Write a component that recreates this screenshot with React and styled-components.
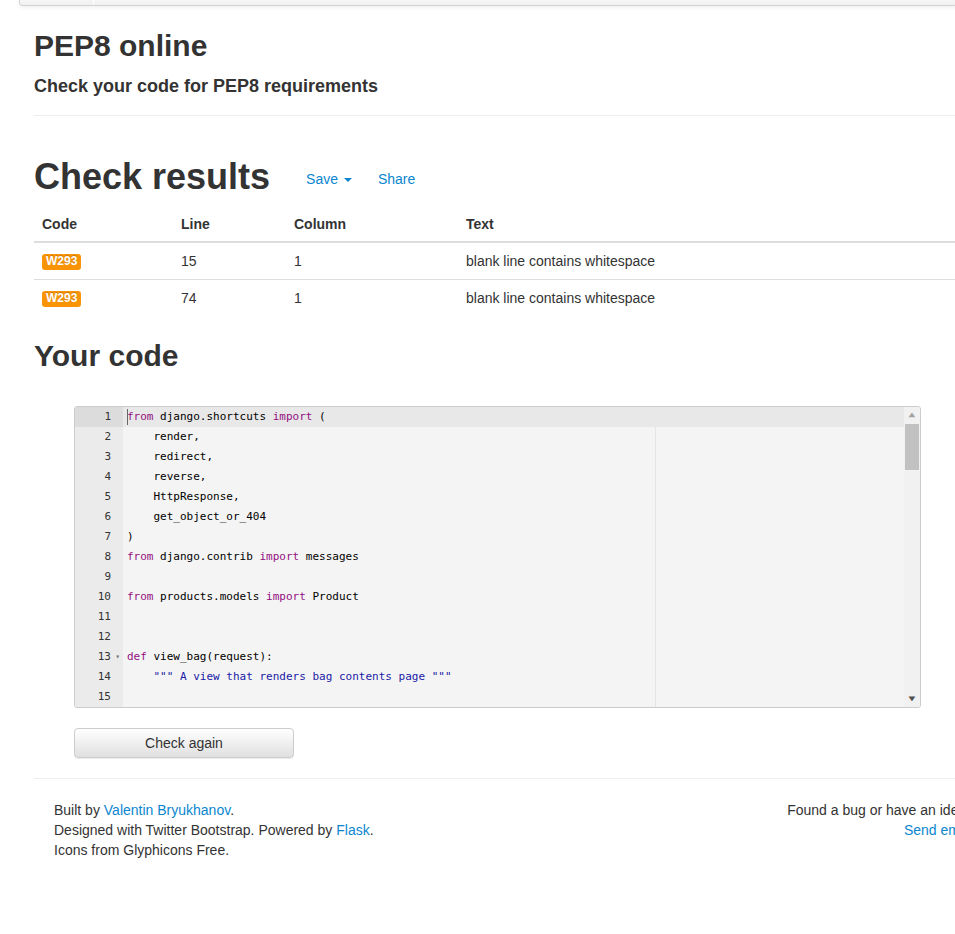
import React from 'react'
import styled, { createGlobalStyle } from 'styled-components'

const GlobalStyle = createGlobalStyle`
  html, body {
    margin: 0;
    padding: 0;
    background: #fff;
    overflow-x: hidden;
  }
  body {
    font-family: "Liberation Sans", Arial, sans-serif;
    font-size: 14px;
    line-height: 20px;
    color: #333;
  }
`

const codeLines = [
  [['k', 'from'], ['t', ' django.shortcuts '], ['k', 'import'], ['t', ' (']],
  [['t', '    render,']],
  [['t', '    redirect,']],
  [['t', '    reverse,']],
  [['t', '    HttpResponse,']],
  [['t', '    get_object_or_404']],
  [['t', ')']],
  [['k', 'from'], ['t', ' django.contrib '], ['k', 'import'], ['t', ' messages']],
  [],
  [['k', 'from'], ['t', ' products.models '], ['k', 'import'], ['t', ' Product']],
  [],
  [],
  [['k', 'def'], ['t', ' view_bag(request):']],
  [['t', '    '], ['s', '""" A view that renders bag contents page """']],
  [],
]

const results = [
  { code: 'W293', line: 15, column: 1, text: 'blank line contains whitespace' },
  { code: 'W293', line: 74, column: 1, text: 'blank line contains whitespace' },
]

function App() {
  return (
    <>
      <GlobalStyle />
      <Container>
        <Navbar>
          <Brand />
        </Navbar>
        <PageHeader>
          <Title>PEP8 online</Title>
          <Subtitle>Check your code for PEP8 requirements</Subtitle>
        </PageHeader>

        <ResultsHeader>
          <BigTitle>Check results</BigTitle>
          <HeaderLinks>
            <Link href="#">
              Save <Caret />
            </Link>
            <Link href="#">Share</Link>
          </HeaderLinks>
        </ResultsHeader>

        <Table>
          <thead>
            <tr>
              <Th $w={123}>Code</Th>
              <Th $w={97}>Line</Th>
              <Th $w={156}>Column</Th>
              <Th>Text</Th>
            </tr>
          </thead>
          <tbody>
            {results.map((r, i) => (
              <tr key={i}>
                <Td><Label>{r.code}</Label></Td>
                <Td>{r.line}</Td>
                <Td>{r.column}</Td>
                <Td>{r.text}</Td>
              </tr>
            ))}
          </tbody>
        </Table>

        <Title>Your code</Title>

        <CodeSection>
          <Editor>
            <Gutter>
              {codeLines.map((_, i) => (
                <GutterCell key={i} $active={i === 0}>
                  {i + 1}
                  {i === 12 && <Fold>▾</Fold>}
                </GutterCell>
              ))}
            </Gutter>
            <Content>
              <PrintMargin />
              {codeLines.map((tokens, i) => (
                <CodeLine key={i} $active={i === 0}>
                  {i === 0 && <Cursor />}
                  {tokens.map(([type, value], j) => (
                    <Token key={j} $type={type}>{value}</Token>
                  ))}
                </CodeLine>
              ))}
            </Content>
            <Scrollbar>
              <ScrollArrow>▲</ScrollArrow>
              <ScrollTrack>
                <Thumb />
              </ScrollTrack>
              <ScrollArrow>▼</ScrollArrow>
            </Scrollbar>
          </Editor>
          <Button>Check again</Button>
        </CodeSection>

        <Hr />

        <Footer>
          <FooterCol>
            <div>Built by <Link href="#">Valentin Bryukhanov</Link>.</div>
            <div>Designed with Twitter Bootstrap. Powered by <Link href="#">Flask</Link>.</div>
            <div>Icons from Glyphicons Free.</div>
          </FooterCol>
          <FooterCol $right>
            <div>Found a bug or have an idea?</div>
            <div><Link href="#">Send email</Link></div>
          </FooterCol>
        </Footer>
      </Container>
    </>
  )
}

export default App

const Container = styled.div`
  width: 960px;
  margin-left: 19px;
  padding: 0 15px 70px;
`

const Navbar = styled.div`
  height: 5px;
  margin: 0 -15px;
  display: flex;
  background: linear-gradient(#f6f6f6, #f0f0f0);
  border: 1px solid #d4d4d4;
  border-top: none;
  border-radius: 0 0 4px 4px;
  box-shadow: 0 1px 4px rgba(0, 0, 0, 0.08);
`

const Brand = styled.div`
  width: 73px;
  border-right: 1px solid #fff;
`

const PageHeader = styled.div`
  padding-bottom: 19px;
  margin-bottom: 41px;
  border-bottom: 1px solid #eee;
`

const Title = styled.h2`
  margin: 23px 0 0;
  font-size: 30px;
  line-height: 33px;
  font-weight: 700;
  color: #333;
`

const Subtitle = styled.h4`
  margin: 14px 0 0;
  font-size: 18px;
  line-height: 20px;
  font-weight: 700;
`

const ResultsHeader = styled.div`
  display: flex;
  align-items: center;
  height: 40px;
`

const BigTitle = styled.h1`
  margin: 0;
  font-size: 36px;
  line-height: 40px;
  font-weight: 700;
`

const HeaderLinks = styled.div`
  display: flex;
  gap: 26px;
  margin-left: 36px;
  margin-top: 3px;
`

const Link = styled.a`
  color: #0b86cf;
  text-decoration: none;
`

const Caret = styled.span`
  display: inline-block;
  width: 0;
  height: 0;
  margin-left: 2px;
  vertical-align: middle;
  border-top: 4px solid #0b86cf;
  border-left: 4px solid transparent;
  border-right: 4px solid transparent;
`

const Table = styled.table`
  width: 100%;
  table-layout: fixed;
  margin-top: 10px;
  border-collapse: collapse;
  border-spacing: 0;
`

const Th = styled.th`
  width: ${({ $w }) => ($w ? `${$w}px` : 'auto')};
  text-align: left;
  padding: 7px 8px;
  line-height: 20px;
  font-weight: 700;
  border-bottom: 2px solid #ddd;
`

const Td = styled.td`
  padding: 8px;
  line-height: 20px;
  border-top: 1px solid #ddd;
  tr:first-child > & {
    border-top: none;
  }
`

const Label = styled.span`
  display: inline-block;
  padding: 1px 4px 2px;
  font-size: 12px;
  line-height: 13px;
  font-weight: 700;
  color: #fff;
  background: #f89406;
  border-radius: 3px;
  vertical-align: 1px;
  text-shadow: 0 -1px 0 rgba(0, 0, 0, 0.2);
`

const CodeSection = styled.div`
  padding: 34px 40px 20px;
`

const Editor = styled.div`
  display: flex;
  width: 845px;
  height: 300px;
  border: 1px solid #ccc;
  border-radius: 3px;
  background: #f4f4f4;
  overflow: hidden;
  font-family: "DejaVu Sans Mono", "Liberation Mono", monospace;
  font-size: 11px;
`

const Gutter = styled.div`
  width: 48px;
  flex-shrink: 0;
  background: #ebebeb;
  color: #333;
`

const GutterCell = styled.div`
  position: relative;
  height: 20px;
  line-height: 20px;
  text-align: right;
  padding-right: 12px;
  background: ${({ $active }) => ($active ? '#dcdcdc' : 'transparent')};
`

const Fold = styled.span`
  position: absolute;
  right: 3px;
  top: 0;
  font-size: 8px;
  color: #777;
`

const Content = styled.div`
  position: relative;
  flex: 1;
`

const PrintMargin = styled.div`
  position: absolute;
  top: 0;
  bottom: 0;
  left: 532px;
  width: 1px;
  background: #e4e4e4;
`

const CodeLine = styled.div`
  position: relative;
  height: 20px;
  line-height: 20px;
  padding-left: 4px;
  white-space: pre;
  color: #000;
  background: ${({ $active }) => ($active ? '#e8e8e8' : 'transparent')};
`

const Cursor = styled.span`
  position: absolute;
  left: 4px;
  top: 2px;
  width: 1px;
  height: 16px;
  background: #666;
`

const Token = styled.span`
  color: ${({ $type }) => ($type === 'k' ? '#930f80' : $type === 's' ? '#1a1aa6' : '#000')};
`

const Scrollbar = styled.div`
  width: 16px;
  flex-shrink: 0;
  display: flex;
  flex-direction: column;
  background: #f1f1f1;
`

const ScrollArrow = styled.div`
  height: 16px;
  line-height: 16px;
  text-align: center;
  font-size: 8px;
  transform: scaleX(1.4);
  color: #a3a3a3;
  &:last-child {
    color: #505050;
  }
`

const ScrollTrack = styled.div`
  flex: 1;
  padding: 1px 1px;
`

const Thumb = styled.div`
  height: 46px;
  background: #c1c1c1;
`

const Button = styled.button`
  display: block;
  width: 220px;
  height: 30px;
  margin-top: 20px;
  font-family: "Liberation Sans", Arial, sans-serif;
  font-size: 14px;
  color: #333;
  background: linear-gradient(#fff, #e0e0e0);
  border: 1px solid #ccc;
  border-radius: 4px;
  box-shadow: inset 0 1px 0 rgba(255, 255, 255, 0.15), 0 1px 1px rgba(0, 0, 0, 0.075);
`

const Hr = styled.hr`
  margin: 0;
  border: 0;
  border-top: 1px solid #eee;
`

const Footer = styled.div`
  display: flex;
  justify-content: space-between;
  padding: 21px 20px 0;
`

const FooterCol = styled.div`
  text-align: ${({ $right }) => ($right ? 'right' : 'left')};
`
